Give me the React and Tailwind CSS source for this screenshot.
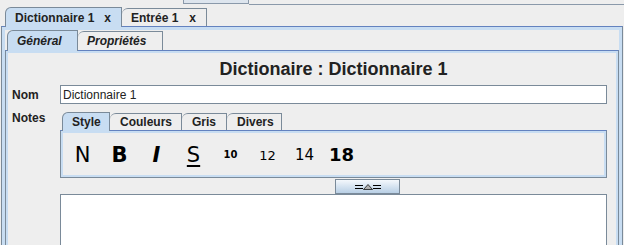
import React from 'react';

const sans = "font-['Liberation_Sans',Arial,sans-serif]";
const deja = "font-['DejaVu_Sans',sans-serif]";

function SplitIcon() {
  return (
    <svg width="26" height="6" viewBox="0 0 26 6">
      <rect x="0" y="1" width="8" height="1" fill="#000" />
      <rect x="0" y="4" width="8" height="1" fill="#000" />
      <rect x="18" y="1" width="8" height="1" fill="#000" />
      <rect x="18" y="4" width="8" height="1" fill="#000" />
      <path d="M8.5 5.5 L13 0.5 L17.5 5.5 Z" fill="#b0b0b0" stroke="#000" strokeWidth="0.7" />
    </svg>
  );
}

export default function App() {
  return (
    <div className={`w-[624px] h-[245px] overflow-hidden bg-[#eeeeee] text-[#222222] ${sans}`}>
      {/* parent tab strip remnant */}
      <div className="flex h-[5px]">
        <div className="w-[183px]" />
        <div className="w-[66px] h-[4px] border-x border-b border-[#8a99aa] bg-[#dde5ee]" />
        <div className="flex-1 h-[5px] border-b border-[#8a99aa]" />
      </div>

      {/* document tabs */}
      <div className="flex items-end h-[21px] pl-[5px] text-[12px] font-bold leading-[14px]">
        <div className="relative z-10 -mb-px flex items-center w-[117px] h-[20px] pl-[9px] bg-[#c8ddf2] border border-b-0 border-[#7a8a99] rounded-tl-[6px]">
          <span>Dictionnaire 1</span>
          <span className="ml-[10px]">x</span>
        </div>
        <div className="flex items-center w-[85px] h-[18px] pl-[9px] border border-b-0 border-l-0 border-[#7a8a99] rounded-tl-[6px]">
          <span>Entrée 1</span>
          <span className="ml-[11px]">x</span>
        </div>
      </div>

      {/* document content */}
      <div className="ml-[1px] w-[622px] h-[230px] border border-t-[#6382bf] border-[#7a8a99] bg-[#c8ddf2] pt-[3px] px-[3px]">
        <div className="h-full bg-[#eeeeee] flex flex-col">
          {/* Général / Propriétés */}
          <div className="flex items-end h-[21px] pl-[2px] text-[12px] font-bold italic leading-[14px]">
            <div className="relative z-10 -mb-px flex items-center w-[71px] h-[21px] pl-[9px] bg-[#c8ddf2] border border-b-0 border-[#7a8a99] rounded-tl-[6px]">
              Général
            </div>
            <div className="flex items-center w-[85px] h-[19px] pl-[9px] border border-b-0 border-l-0 border-[#7a8a99] rounded-tl-[6px]">
              Propriétés
            </div>
          </div>

          <div className="flex-1 border border-t-[#6382bf] border-[#7a8a99] bg-[#c8ddf2] pt-[2px] px-[2px]">
            <div className="h-full bg-[#eeeeee] pt-[6px] pl-[4px]">
              <div className="pl-[48px]">
                <div className="w-[547px] text-center text-[18px] leading-[20px] font-bold">
                  Dictionaire : Dictionnaire 1
                </div>
              </div>

              <div className="flex items-center mt-[6px] h-[19px]">
                <div className="w-[48px] pt-[1px] text-[12px] font-bold">Nom</div>
                <div className="w-[547px] h-[19px] flex items-center pl-[2px] pt-[1px] bg-white border border-[#7a8a99] text-[12px]">
                  Dictionnaire 1
                </div>
              </div>

              <div className="flex">
                <div className="w-[48px] pt-[7px] text-[12px] leading-[14px] font-bold">Notes</div>
                <div className="w-[547px]">
                  <div className="flex items-end h-[26px] pl-[2px] text-[12px] font-bold leading-[14px]">
                    <div className="relative z-10 -mb-px flex items-center w-[48px] h-[19px] pl-[9px] bg-[#c8ddf2] border border-b-0 border-[#7a8a99] rounded-tl-[6px]">
                      Style
                    </div>
                    <div className="flex items-center w-[72px] h-[17px] pl-[10px] border border-b-0 border-l-0 border-[#7a8a99] rounded-tl-[6px]">
                      Couleurs
                    </div>
                    <div className="flex items-center w-[45px] h-[17px] pl-[10px] border border-b-0 border-l-0 border-[#7a8a99] rounded-tl-[6px]">
                      Gris
                    </div>
                    <div className="flex items-center w-[55px] h-[17px] pl-[10px] border border-b-0 border-l-0 border-[#7a8a99] rounded-tl-[6px]">
                      Divers
                    </div>
                  </div>

                  <div className="h-[48px] border border-t-[#6382bf] border-[#7a8a99] bg-[#c8ddf2] p-[2px]">
                    <div className={`h-full bg-[#eeeeee] flex items-center pl-[1px] pt-[2px] text-black ${deja}`}>
                      <div className="w-[37px] text-center text-[21px] leading-[24px]">N</div>
                      <div className="w-[37px] text-center text-[21px] leading-[24px] font-bold">B</div>
                      <div className="w-[37px] text-center text-[21px] leading-[24px] font-bold italic">I</div>
                      <div className="w-[37px] text-center text-[21px] leading-[24px] underline underline-offset-[3px]">S</div>
                      <div className="w-[37px] text-center text-[10px] leading-[12px] font-bold">10</div>
                      <div className="w-[37px] text-center text-[13px] leading-[15px]">12</div>
                      <div className="w-[37px] text-center text-[15px] leading-[17px]">14</div>
                      <div className="w-[37px] text-center text-[18px] leading-[20px] font-bold">18</div>
                    </div>
                  </div>

                  <div className="mt-[1px] ml-[275px] w-[65px] h-[15px] flex items-center justify-center border border-[#7a8a99] bg-gradient-to-b from-[#f4f8fc] to-[#b8cfe5]">
                    <SplitIcon />
                  </div>

                  <div className="h-[80px] bg-white border border-[#7a8a99]" />
                </div>
              </div>
            </div>
          </div>
        </div>
      </div>
    </div>
  );
}
